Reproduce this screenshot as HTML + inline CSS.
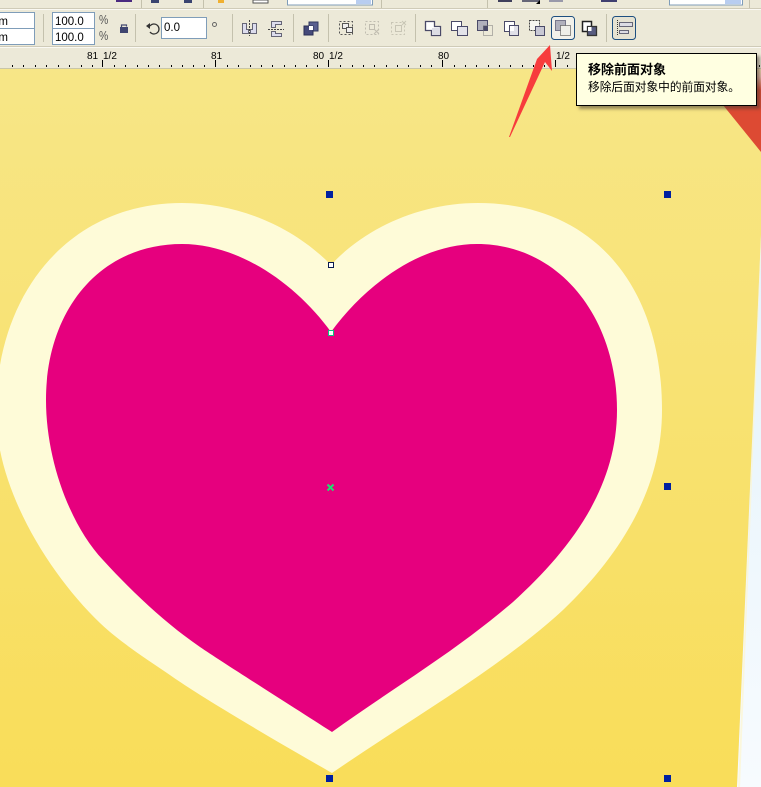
<!DOCTYPE html>
<html><head><meta charset="utf-8"><style>
html,body{margin:0;padding:0}
body{width:761px;height:787px;overflow:hidden;position:relative;background:#ece9d8;font-family:"Liberation Sans","Noto Sans CJK SC",sans-serif}
svg{position:absolute;left:0;top:0}
.inp{position:absolute;background:#fff;border:1px solid #7f9db9;box-sizing:border-box;font-size:11.5px;line-height:18px;padding-left:2px;color:#000}
.pc{position:absolute;left:99px;font-size:13px;color:#555;transform:scaleX(.8);transform-origin:left top}
.t{font-size:10px;fill:#000;font-family:"Liberation Sans",sans-serif}
#tip{position:absolute;left:576px;top:53px;width:181px;height:53px;box-sizing:border-box;background:#ffffe1;border:1px solid #000;box-shadow:3px 3px 3px rgba(70,60,50,.55);padding:7px 11px;font-size:11.7px;line-height:18px;color:#000;white-space:nowrap}
#tip b{display:block;font-size:13px}
</style></head><body>
<svg width="761" height="787" viewBox="0 0 761 787">
<defs>
<linearGradient id="y" x1="0" y1="68" x2="0" y2="787" gradientUnits="userSpaceOnUse"><stop offset="0" stop-color="#f7e687"/><stop offset="1" stop-color="#f9dd59"/></linearGradient>
<linearGradient id="b" x1="0" y1="200" x2="0" y2="787" gradientUnits="userSpaceOnUse"><stop offset="0" stop-color="#e2f2fb"/><stop offset="1" stop-color="#f7fbfe"/></linearGradient>
<linearGradient id="r2" x1="0" y1="68" x2="0" y2="90" gradientUnits="userSpaceOnUse"><stop offset="0" stop-color="#f4e2b4"/><stop offset=".4" stop-color="#eebfae"/><stop offset="1" stop-color="#dd4a33"/></linearGradient>
</defs>
<rect x="0" y="68" width="761" height="719" fill="url(#b)"/>
<polygon points="0,68 761,68 761,235 737,787 0,787" fill="url(#y)"/>
<polygon points="738,787 761,235 761,250 740,787" fill="#fdf5cf" opacity=".7"/>
<polygon points="700,68 761,68 761,152 723,105" fill="url(#r2)"/>
<path d="M331 265C295 228 240 203 182 203C70 203 -4 292 -4 412C-4 490 50 575 100 623C120 642 145 658 167 673C205 700 290 749 332 773C412 718 500 668 563 610C622 553 662 488 662 410C662 288 595 203 478 203C420 203 365 228 331 265Z" fill="#fefbd8"/>
<path d="M331 332C297 285 240 244 182 244C100 244 46 310 46 400C46 460 70 525 103 560C135 595 168 625 200 647C222 662 290 705 332 732C390 690 455 652 513 602C568 552 617 490 617 410C617 318 560 244 477 244C420 244 365 285 331 332Z" fill="#e6007e"/>
<g fill="#0020a0"><rect x="326" y="191" width="7" height="7"/><rect x="664" y="191" width="7" height="7"/><rect x="664" y="483" width="7" height="7"/><rect x="326" y="775" width="7" height="7"/><rect x="664" y="775" width="7" height="7"/></g>
<rect x="328.500" y="262.500" width="5" height="5" fill="#fff" stroke="#0a1a50"/>
<rect x="328.500" y="330.500" width="5" height="5" fill="#fff" stroke="#10c080"/>
<path d="M327.500 484.500l6 6m0-6l-6 6" stroke="#20e070" stroke-width="2"/>

<!-- toolbar -->
<rect width="761" height="69" fill="#ece9d8"/>
<rect y="8" width="761" height="1" fill="#cfcbb8"/>
<rect y="9" width="761" height="1" fill="#faf9f3"/>
<rect y="46" width="761" height="1" fill="#cfcbb8"/>
<rect y="47" width="761" height="1" fill="#faf9f3"/>
<rect y="68" width="761" height="1" fill="#c9c6a8"/>
<g fill="#c4c1ad">
<rect x="43" y="14" width="1" height="28"/><rect x="135" y="14" width="1" height="28"/><rect x="232" y="14" width="1" height="28"/><rect x="293" y="14" width="1" height="28"/><rect x="328" y="14" width="1" height="28"/><rect x="415" y="14" width="1" height="28"/><rect x="606" y="14" width="1" height="28"/>
<rect x="141" y="0" width="1" height="8"/><rect x="203" y="0" width="1" height="8"/><rect x="381" y="0" width="1" height="8"/><rect x="487" y="0" width="1" height="8"/><rect x="749" y="0" width="1" height="8"/>
</g>
<!-- top row fragments -->
<rect x="116" y="0" width="16" height="2" fill="#4a2a80"/>
<rect x="151" y="0" width="8" height="3" fill="#3a4470"/><rect x="184" y="0" width="8" height="3" fill="#3a4470"/>
<rect x="218" y="0" width="6" height="3" fill="#f0b030"/>
<rect x="253" y="0" width="15" height="3" fill="#fff" stroke="#555"/>
<rect x="287.500" y="-3" width="85" height="8" fill="#fff" stroke="#7f9db9"/><rect x="356" y="0" width="15" height="4" fill="#b8cdf0"/>
<rect x="498" y="0" width="14" height="2" fill="#3f3f5c"/><rect x="522" y="0" width="18" height="2" fill="#667"/><path d="M536 4l4-4v4z" fill="#000"/><rect x="549" y="0" width="14" height="2" fill="#99a"/><rect x="601" y="0" width="16" height="2" fill="#3f3f70"/>
<rect x="669.500" y="-3" width="73" height="8" fill="#fff" stroke="#7f9db9"/><rect x="725" y="0" width="16" height="4" fill="#b8cdf0"/>
<!-- lock -->
<path d="M121.500 27.500v-2.500h5v1.500" fill="none" stroke="#444a70" stroke-width="1.200"/><rect x="120" y="27" width="8" height="6" fill="#3f4570"/>
<!-- rotate -->
<path d="M150 26a5 5 0 1 1 0 6" fill="none" stroke="#333" stroke-width="1.300"/><path d="M146 26l4-3v6z" fill="#333"/>
<circle cx="214.500" cy="24.500" r="2" fill="none" stroke="#666"/>
<!-- mirror -->
<path d="M249.500 20v16" stroke="#444" stroke-dasharray="2 1"/><path d="M242.500 23.500h4v6l2 0v4h-6zM256.500 23.500h-4v6l-2 0v4h6z" fill="#dde" stroke="#667"/>
<path d="M268 29.500h16" stroke="#444" stroke-dasharray="2 1"/><path d="M271.500 21.500h10v3h-6v3h-4zM271.500 36.500h10v-3h-6v-2h-4z" fill="#dde" stroke="#667"/>
<!-- combine -->
<rect x="309" y="22" width="9" height="9" fill="#5a6090" stroke="#333a60"/><rect x="304" y="26" width="9" height="9" fill="#454a7a" stroke="#2a2f55"/><rect x="309" y="26" width="4" height="4" fill="#fff"/>
<!-- group -->
<g fill="none" stroke="#555"><rect x="339.500" y="21.500" width="13" height="13" stroke-dasharray="2 2"/><rect x="342.500" y="23.500" width="6" height="5" fill="#eee"/><rect x="346.500" y="27.500" width="6" height="5" fill="#eee"/></g>
<g fill="none" stroke="#c0bdb0"><rect x="365.500" y="21.500" width="13" height="13" stroke-dasharray="2 2"/><rect x="369.500" y="24.500" width="5" height="5"/><path d="M374 29l5 5M379 29l-5 5"/></g>
<g fill="none" stroke="#c8c5b5"><rect x="391.500" y="22.500" width="13" height="12" stroke-dasharray="2 2"/><rect x="395.500" y="25.500" width="6" height="6"/><path d="M402 21l4 4M406 21l-4 4"/></g>
<!-- shaping -->
<path d="M425.500 21.500h9v5h6v9h-9v-5h-6z" fill="#fff" stroke="#4a4a68" stroke-width="1.300"/><rect x="432" y="28" width="8" height="7" fill="#dcdce4"/>
<rect x="451.500" y="21.500" width="10" height="9" fill="#fff" stroke="#4a4a68"/><rect x="457.500" y="26.500" width="10" height="9" fill="#e3e3e9" stroke="#4a4a68"/>
<rect x="477.500" y="20.500" width="10" height="10" fill="#b0b0bc" stroke="#4a4a68"/><rect x="483" y="26" width="5" height="5" fill="#4a4a68"/><rect x="483.500" y="25.500" width="9" height="10" fill="none" stroke="#777" stroke-dasharray="1 1"/>
<rect x="504.500" y="21.500" width="10" height="10" fill="#fff" stroke="#4a4a68"/><rect x="509.500" y="25.500" width="9" height="10" fill="#e0e0e8" stroke="#4a4a68"/><rect x="510" y="26" width="4" height="5" fill="#fff"/>
<rect x="529.500" y="20.500" width="10" height="10" fill="#f6f6f0" stroke="#444" stroke-dasharray="2 1"/><rect x="535.500" y="26.500" width="9" height="9" fill="#c8c8d4" stroke="#4a4a68"/>
<!-- active button -->
<rect x="551.500" y="16.500" width="23" height="23" rx="3" fill="#f2f1ea" stroke="#1d4f80"/>
<rect x="555.500" y="20.500" width="10" height="10" fill="#b0b0bc" stroke="#77778c"/><rect x="560.500" y="25.500" width="10" height="10" fill="#eeeee8" stroke="#333" stroke-dasharray="1 1"/>
<rect x="582.500" y="21.500" width="9" height="10" fill="#fff" stroke="#222" stroke-width="1.500"/><rect x="587.500" y="26.500" width="9" height="9" fill="#585c80" stroke="#333" stroke-width="1.300"/><rect x="588" y="27" width="3.500" height="4" fill="#fff"/>
<!-- align button -->
<rect x="612.500" y="16.500" width="23" height="23" rx="3" fill="#e5e2d2" stroke="#1d4f80"/>
<path d="M617.500 20v16" stroke="#333" stroke-dasharray="1 1"/><rect x="619.500" y="22.500" width="13" height="4" fill="#dcdce4" stroke="#667"/><rect x="619.500" y="30.500" width="9" height="3" fill="#dcdce4" stroke="#667"/>
<!-- ruler -->
<g stroke="#000" stroke-width="1">
<path d="M102.500 60v7M215.500 60v7M328.500 60v7M442.500 60v7M555.500 60v7"/>
<path d="M12.500 65v2M23.500 65v2M35.500 65v2M46.500 65v2M58.500 65v2M69.500 65v2M81.500 65v2M92.500 65v2M114.500 65v2M125.500 65v2M137.500 65v2M148.500 65v2M159.500 65v2M171.500 65v2M182.500 65v2M193.500 65v2M204.500 65v2M227.500 65v2M238.500 65v2M250.500 65v2M261.500 65v2M272.500 65v2M284.500 65v2M295.500 65v2M306.500 65v2M317.500 65v2M340.500 65v2M352.500 65v2M363.500 65v2M374.500 65v2M386.500 65v2M397.500 65v2M408.500 65v2M420.500 65v2M431.500 65v2M454.500 65v2M465.500 65v2M476.500 65v2M488.500 65v2M499.500 65v2M510.500 65v2M522.500 65v2M533.500 65v2M544.500 65v2M567.500 65v2M759.500 65v2"/>
</g>
<text class="t" x="87" y="59">81</text><text class="t" x="103" y="59">1/2</text><text class="t" x="211" y="59">81</text><text class="t" x="313" y="59">80</text><text class="t" x="329" y="59">1/2</text><text class="t" x="438" y="59">80</text><text class="t" x="556" y="59">1/2</text>
<!-- arrow -->
<path d="M550 45L552 71L545 62L510 137H509L537 59Z" fill="#f73c3c"/>
</svg>
<div class="inp" style="left:-40px;top:12px;width:75px;height:17px;text-align:right;padding-right:26px">m</div>
<div class="inp" style="left:-40px;top:28px;width:75px;height:17px;text-align:right;padding-right:26px">m</div>
<div class="inp" style="left:52px;top:12px;width:43px;height:17px">100.0</div>
<div class="inp" style="left:52px;top:28px;width:43px;height:17px">100.0</div>
<div class="pc" style="top:12px">%</div>
<div class="pc" style="top:28px">%</div>
<div class="inp" style="left:161px;top:17px;width:46px;height:22px;line-height:21px">0.0</div>
<div id="tip"><b>移除前面对象</b>移除后面对象中的前面对象。</div>
</body></html>
